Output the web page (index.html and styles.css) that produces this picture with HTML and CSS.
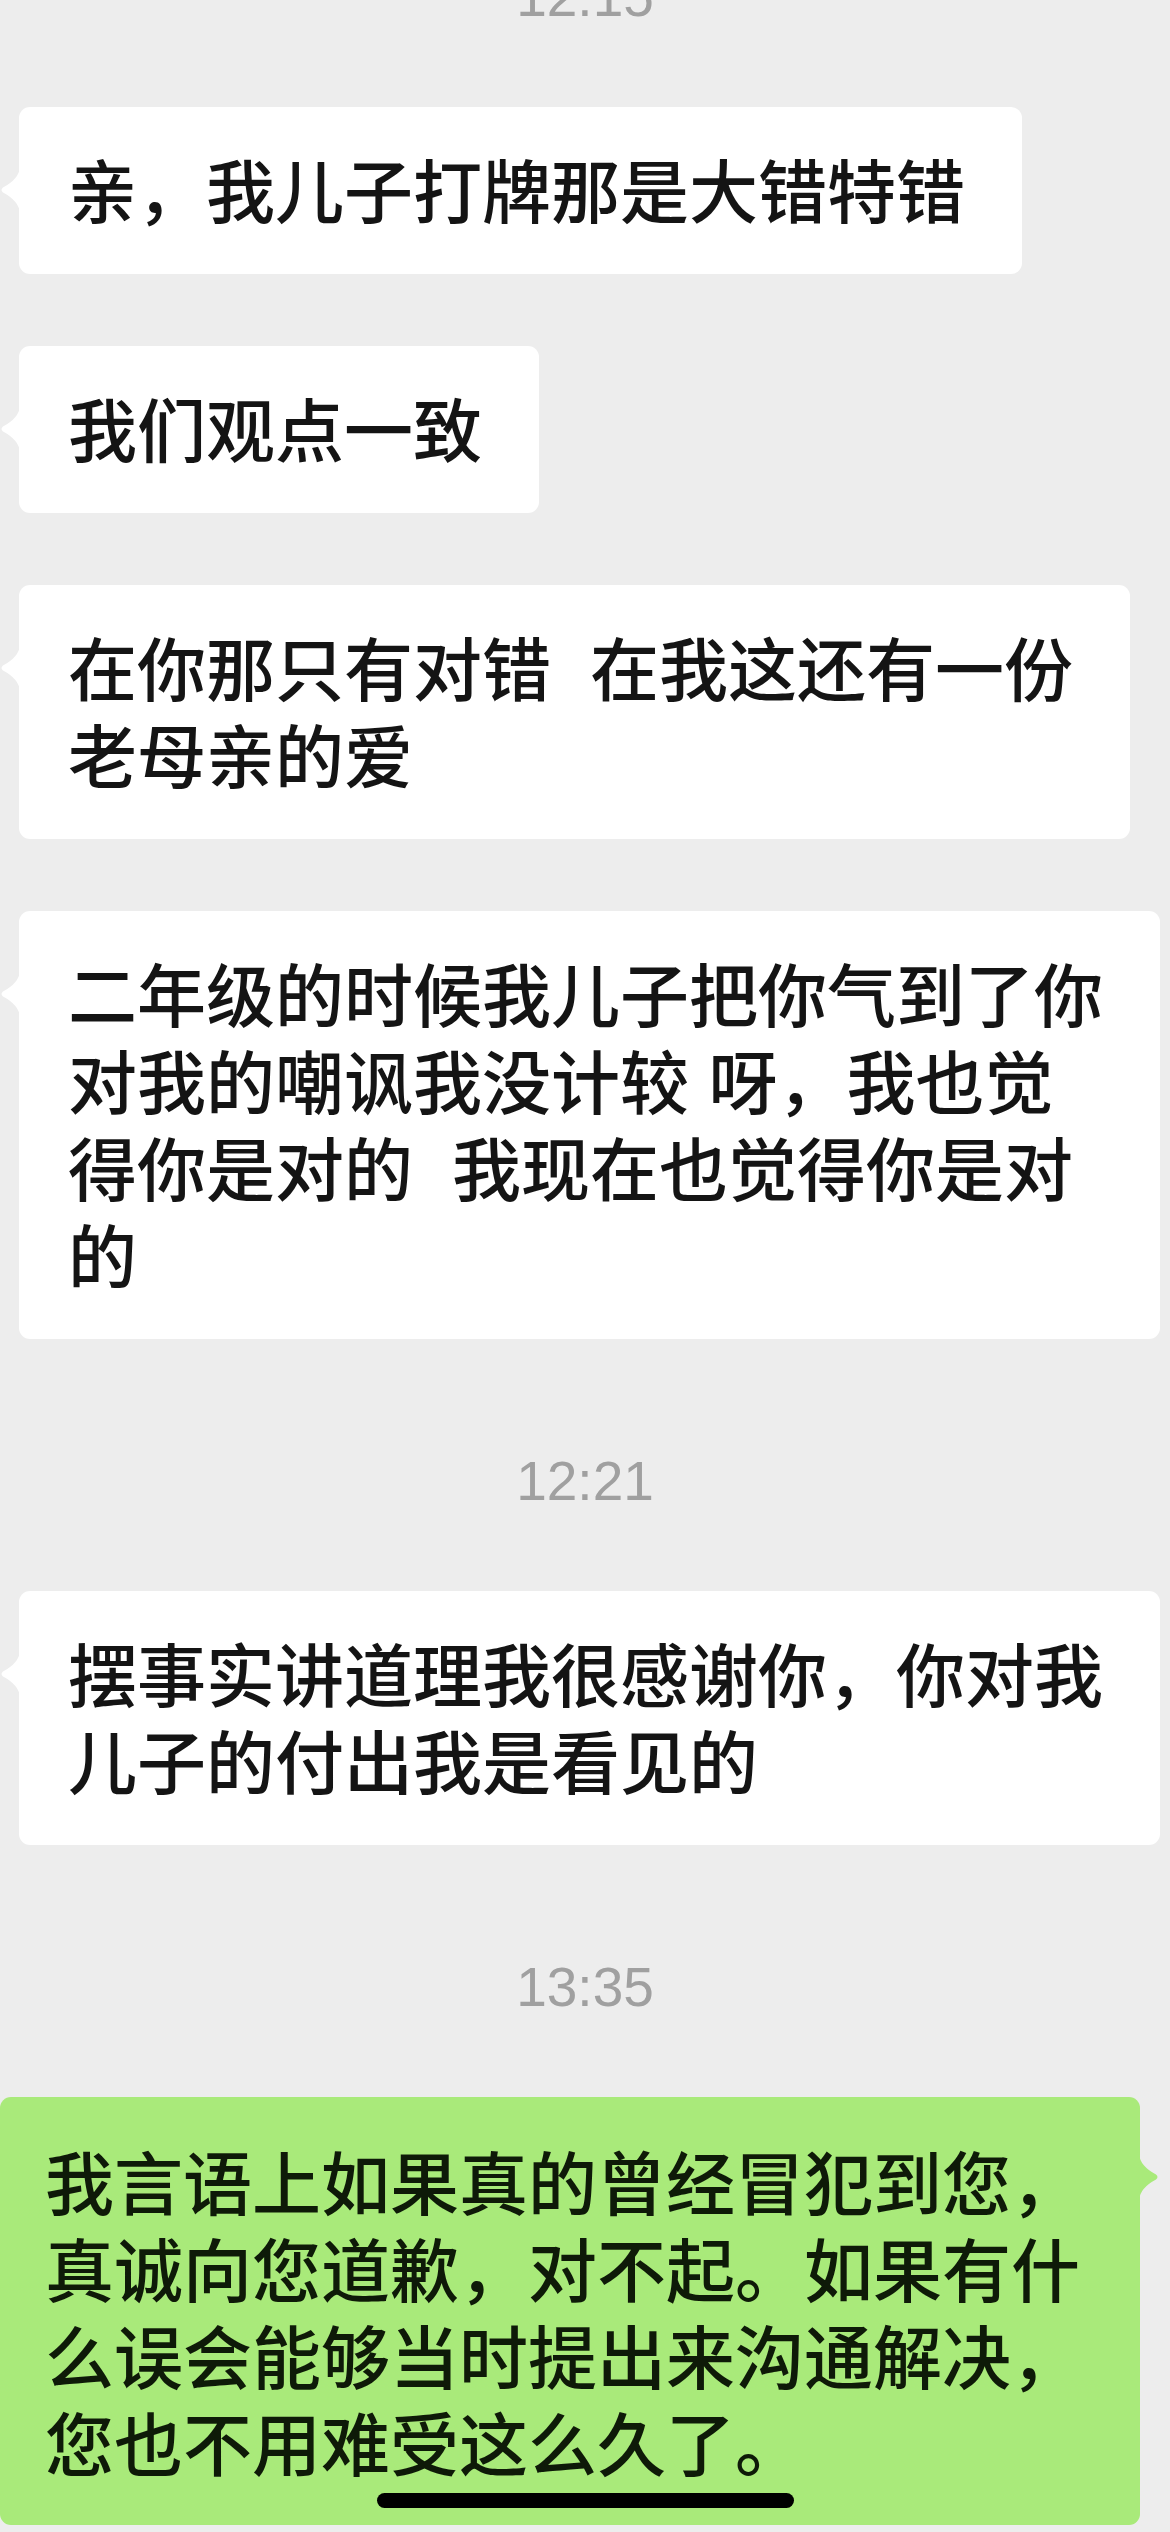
FILE: index.html
```html
<!DOCTYPE html>
<html lang="zh-CN">
<head>
  <meta charset="UTF-8" />
  <meta name="viewport" content="width=device-width, initial-scale=1.0"/>
  <title>聊天记录</title>
  <link rel="stylesheet" href="styles.css">
</head>
<body>
  <div class="chat">
    <div class="time first">12:15</div>

    <div class="row left">
      <div class="bubble">亲，我儿子打牌那是大错特错</div>
    </div>

    <div class="row left">
      <div class="bubble">我们观点一致</div>
    </div>

    <div class="row left">
      <div class="bubble">在你那只有对错  在我这还有一份<br>老母亲的爱</div>
    </div>

    <div class="row left">
      <div class="bubble">二年级的时候我儿子把你气到了你<br>对我的嘲讽我没计较 呀，我也觉<br>得你是对的  我现在也觉得你是对<br>的</div>
    </div>

    <div class="time">12:21</div>

    <div class="row left">
      <div class="bubble">摆事实讲道理我很感谢你，你对我<br>儿子的付出我是看见的</div>
    </div>

    <div class="time">13:35</div>

    <div class="row right">
      <div class="bubble mine">我言语上如果真的曾经冒犯到您，<br>真诚向您道歉，对不起。如果有什<br>么误会能够当时提出来沟通解决，<br>您也不用难受这么久了。</div>
    </div>
  </div>

  <div class="home-bar"></div>
</body>
</html>
```

FILE: styles.css
```css
* {
  box-sizing: border-box;
  margin: 0;
  padding: 0;
}

html, body {
  width: 1170px;
  height: 2532px;
  overflow: hidden;
}

body {
  background-color: #ededed;
  font-family: "Noto Sans CJK SC", "Noto Sans", sans-serif;
  color: #141414;
  position: relative;
}

.chat {
  display: flex;
  flex-direction: column;
}

/* timestamps between groups */
.time {
  height: 60px;
  line-height: 60px;
  margin: 40px 0 80px;
  text-align: center;
  font-family: "Liberation Sans", Arial, sans-serif;
  font-size: 55px;
  color: #a0a0a0;
}

.time.first {
  margin-top: -33px;
}

.row {
  display: flex;
  margin-bottom: 72px;
}

.row.left {
  justify-content: flex-start;
  padding-left: 19px;
}

.row.right {
  justify-content: flex-end;
  padding-right: 30px;
}

.bubble {
  position: relative;
  background: #ffffff;
  border-radius: 11px;
  padding: 38px 57px 42px 49px;
  font-size: 69px;
  font-weight: 500;
  line-height: 87px;
  white-space: pre;
  word-spacing: 4px;
}

/* little tail pointing at the sender */
.bubble::before {
  content: "";
  position: absolute;
  top: 60px;
  left: -19px;
  width: 20px;
  height: 46px;
  background: inherit;
  clip-path: path('M20 0 Q19 12 3 20.5 Q0 23 3 25.5 Q19 34 20 46 Z');
}

.bubble.mine {
  background: #a9ea7a;
  color: #0e1a08;
  padding: 40px 60px 40px 45px;
}

.bubble.mine::before {
  left: auto;
  right: -19px;
  top: 57px;
  clip-path: path('M0 0 Q1 12 17 20.5 Q20 23 17 25.5 Q1 34 0 46 Z');
}

.home-bar {
  position: absolute;
  left: 377px;
  top: 2493px;
  width: 417px;
  height: 15px;
  border-radius: 8px;
  background: #000000;
}
```
